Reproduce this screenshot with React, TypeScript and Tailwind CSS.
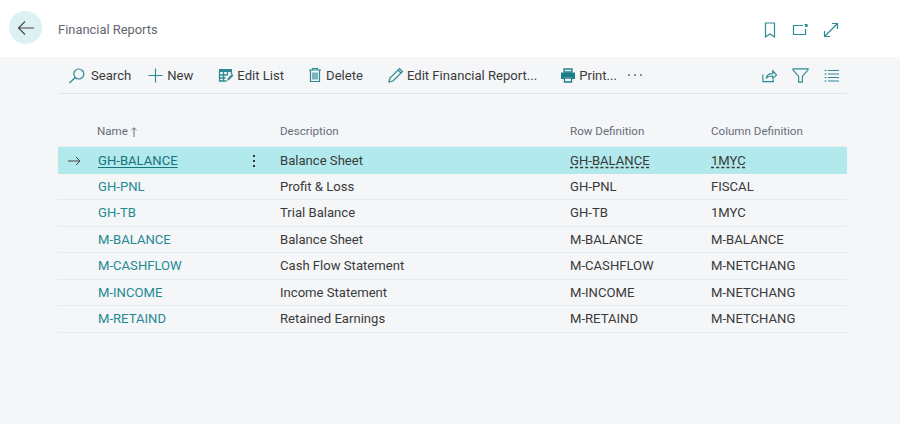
import React from "react";

const T = "#2b8a92";
const Ic = ({ children, w = 18, h = 18, vb = "0 0 18 18" }: { children: React.ReactNode; w?: number; h?: number; vb?: string }) => (
  <svg width={w} height={h} viewBox={vb} fill="none" stroke={T} strokeWidth={1.2} className="shrink-0">
    {children}
  </svg>
);

const rows = [
  ["GH-BALANCE", "Balance Sheet", "GH-BALANCE", "1MYC"],
  ["GH-PNL", "Profit & Loss", "GH-PNL", "FISCAL"],
  ["GH-TB", "Trial Balance", "GH-TB", "1MYC"],
  ["M-BALANCE", "Balance Sheet", "M-BALANCE", "M-BALANCE"],
  ["M-CASHFLOW", "Cash Flow Statement", "M-CASHFLOW", "M-NETCHANG"],
  ["M-INCOME", "Income Statement", "M-INCOME", "M-NETCHANG"],
  ["M-RETAIND", "Retained Earnings", "M-RETAIND", "M-NETCHANG"],
];

const Btn = ({ icon, label, cls }: { icon: React.ReactNode; label: string; cls: string }) => (
  <div className={`flex items-center gap-[3px] ${cls}`}>
    {icon}
    <span>{label}</span>
  </div>
);

export default function App() {
  return (
    <div
      className="w-[900px] h-[424px] overflow-hidden bg-[#f5f6f8] text-[13.1px] text-[#3a3a3a]"
      style={{ fontFamily: "Roboto, sans-serif" }}
    >
      <header className="h-[57px] bg-white flex items-center pl-[9px] pr-[60px]">
        <div className="w-[33px] h-[33px] rounded-full bg-[#dcf1f4] flex items-center justify-center mb-[2px]">
          <svg width="18" height="16" viewBox="0 0 18 16" fill="none" stroke="#444" strokeWidth={1.1}>
            <path d="M17 8H1.5M8 1.5 1.5 8 8 14.5" />
          </svg>
        </div>
        <span className="ml-[16px] mt-[3px] text-[12.9px] text-[#5f6670]">Financial Reports</span>
        <div className="ml-auto flex items-center gap-[13px] mt-[2px]">
          <Ic>
            <path d="M5.500 2h9v14l-4.500-3-4.500 3z" />
          </Ic>
          <Ic>
            <path d="M12 4.500H2.500v9h12V8" />
            <path d="M14 5.500l1.500-1.500M13.500 3.500h2.500v2.500" />
          </Ic>
          <Ic>
            <path d="M2.500 15.500l13-13M10 2.500h5.500V8M2.500 10v5.500H8" />
          </Ic>
        </div>
      </header>

      <div className="ml-[58px] w-[789px] h-[37px] border-b border-[#e3e4e6] flex items-center pt-[1px]">
        <Btn
          cls="ml-[9px] gap-[4px]"
          label="Search"
          icon={
            <Ic w={20} h={20} vb="0 0 20 20">
              <circle cx="11.800" cy="8" r="5" />
              <path d="M8.200 11.500 2.500 17" />
            </Ic>
          }
        />
        <Btn
          cls="ml-[16px]"
          label="New"
          icon={
            <Ic w={17} h={17}>
              <path d="M9 1.500v15M1.500 9h15" />
            </Ic>
          }
        />
        <Btn
          cls="ml-[25px]"
          label="Edit List"
          icon={
            <svg width="16" height="16" viewBox="0 0 16 16" className="shrink-0">
              <path d="M1 2h13v3H1z" fill={T} />
              <path d="M1.500 5v9h7M13.500 5v2M1.500 8h8M1.500 11h6M5.500 5v9M9.500 5v3" fill="none" stroke={T} strokeWidth={1.3} />
              <path d="M9 14l1-3 4-4 1.500 1.500-4 4z" fill={T} />
            </svg>
          }
        />
        <Btn
          cls="ml-[23px]"
          label="Delete"
          icon={
            <Ic w={16} h={16} vb="0 0 16 16">
              <path d="M2 3h12M5.500 3V1.500h5V3M3.500 3v11.500h9V3M6 5.500v7M8 5.500v7M10 5.500v7" />
            </Ic>
          }
        />
        <Btn
          cls="ml-[25px]"
          label="Edit Financial Report..."
          icon={
            <Ic w={16} h={16} vb="0 0 16 16">
              <path d="M1 15l1-4L11.500 1.500l3 3L5 14z" />
              <path d="M10 3l3 3" />
            </Ic>
          }
        />
        <Btn
          cls="ml-[23px]"
          label="Print..."
          icon={
            <svg width="16" height="15" viewBox="0 0 16 15" className="shrink-0">
              <path d="M4 1h8v3H4z" fill="none" stroke="#1f7f87" strokeWidth={1.300} />
              <path d="M1 4.500h14v6.500h-3V9H4v2H1z" fill="#1f7f87" />
              <path d="M4.500 10h7v4h-7z" fill="none" stroke="#1f7f87" strokeWidth={1.300} />
            </svg>
          }
        />
        <div className="ml-[11px] flex gap-[4px] mb-[2px]">
          <span className="w-[2px] h-[2px] rounded-full bg-[#3f7f86]" />
          <span className="w-[2px] h-[2px] rounded-full bg-[#3f7f86]" />
          <span className="w-[2px] h-[2px] rounded-full bg-[#3f7f86]" />
        </div>
        <div className="ml-auto flex items-center gap-[14px] pr-[8px] mb-[1px]">
          <Ic w={17} h={17}>
            <path d="M2 8v7.500h11V13" />
            <path d="M5.500 12c.5-3.500 3-5 7-5V4l4 4.500-4 3.500V9.500c-3 0-5.500.5-7 2.500z" />
          </Ic>
          <Ic w={17} h={17}>
            <path d="M1 2h16v1L11 10v6H7v-6L1 3z" />
          </Ic>
          <div className="ml-[1px] flex">
            <Ic w={15} h={15} vb="0 0 15 15">
              <path d="M.500 2.500h2M4 2.500h11M.500 6h2M4 6h11M.500 9.500h2M4 9.500h11M.500 13h2M4 13h11" strokeWidth={1} />
            </Ic>
          </div>
        </div>
      </div>

      <div className="ml-[58px] w-[789px] mt-[22px]">
        <div className="grid grid-cols-[222px_290px_141px_136px] h-[31px] pt-[2px] items-center text-[11.6px] text-[#666d78] border-b border-[#eceef0]">
          <div className="pl-[39px] flex items-center gap-[3px]">
            Name
            <svg width="6" height="10" viewBox="0 0 6 10" fill="none" stroke="#666d78" strokeWidth={1}>
              <path d="M3 10V1M.500 3 3 .800 5.500 3" />
            </svg>
          </div>
          <div>Description</div>
          <div>Row Definition</div>
          <div>Column Definition</div>
        </div>
        {rows.map((r, i) => {
          const sel = i === 0;
          return (
            <div
              key={r[0]}
              className={`grid grid-cols-[222px_290px_141px_136px] items-center h-[26.500px] pt-[1px] ${
                sel ? "bg-[#b1e9ec]" : "border-b border-[#e9eaec]"
              }`}
            >
              <div className="flex items-center relative pl-[40px]">
                {sel && (
                  <svg className="absolute left-[10px]" width="13" height="10" viewBox="0 0 13 10" fill="none" stroke="#444" strokeWidth={1}>
                    <path d="M0 5h12M8 1l4 4-4 4" />
                  </svg>
                )}
                <span className={sel ? "text-[#17747c] underline underline-offset-2" : "text-[#1f8a93]"}>{r[0]}</span>
                {sel && (
                  <div className="absolute left-[195px] flex flex-col gap-[3px]">
                    <span className="w-[2px] h-[2px] bg-[#333]" />
                    <span className="w-[2px] h-[2px] bg-[#333]" />
                    <span className="w-[2px] h-[2px] bg-[#333]" />
                  </div>
                )}
              </div>
              <div>{r[1]}</div>
              <div>
                <span className={sel ? "underline decoration-dashed underline-offset-2" : ""}>{r[2]}</span>
              </div>
              <div>
                <span className={sel ? "underline decoration-dashed underline-offset-2" : ""}>{r[3]}</span>
              </div>
            </div>
          );
        })}
      </div>
    </div>
  );
}
